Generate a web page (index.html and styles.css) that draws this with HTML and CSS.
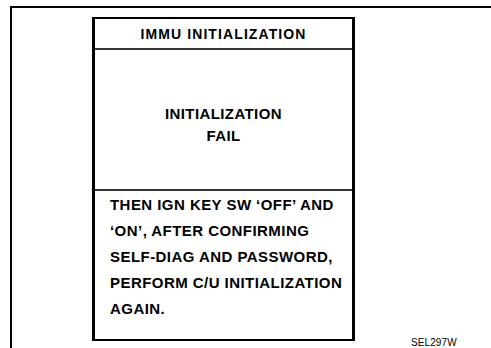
FILE: index.html
```html
<!DOCTYPE html>
<html lang="en">
<head>
    <meta charset="utf-8" />
    <title>IMMU Initialization</title>
    <link rel="stylesheet" href="styles.css">
</head>
<body>
<div class="frame">
    <div class="figure">
        <div class="screen">
            <div class="screen-title">IMMU INITIALIZATION</div>
            <div class="screen-status">
                INITIALIZATION<br>
                FAIL
            </div>
            <div class="screen-note">
                THEN IGN KEY SW ‘OFF’ AND<br>
                ‘ON’, AFTER CONFIRMING<br>
                SELF-DIAG AND PASSWORD,<br>
                PERFORM C/U INITIALIZATION<br>
                AGAIN.
            </div>
        </div>
        <div class="figure-code">SEL297W</div>
    </div>
</div>
</body>
</html>
```

FILE: styles.css
```css
html, body {
    margin: 0;
    background: #fff;
    overflow: hidden;
}
body {
    font-family: "Liberation Sans", Arial, sans-serif;
    color: #000;
}
.frame {
    margin: 6px 0 0 10px;
    height: 342px;
    border-top: 2px solid #000;
    border-left: 2px solid #000;
    box-sizing: border-box;
}
.figure {
    display: flex;
    align-items: flex-end;
    margin: 9px 0 0 80px;
}
.screen {
    width: 263px;
    height: 324px;
    box-sizing: border-box;
    border: 2px solid #000;
    border-left-width: 3px;
    border-right-width: 3px;
    display: flex;
    flex-direction: column;
    font-weight: bold;
    white-space: nowrap;
}
.screen-title {
    height: 28px;
    padding-top: 1px;
    line-height: 28px;
    font-size: 14px;
    letter-spacing: 1.1px;
    text-align: center;
    border-bottom: 2px solid #333;
}
.screen-status {
    height: 141px;
    box-sizing: border-box;
    padding-top: 53px;
    font-size: 15px;
    line-height: 22px;
    letter-spacing: 0.4px;
    text-align: center;
    border-bottom: 2px solid #333;
}
.screen-note {
    flex: 1;
    padding: 1px 0 0 15px;
    font-size: 15px;
    line-height: 26px;
    letter-spacing: 0.45px;
}
.figure-code {
    margin: 0 0 -8px 56px;
    font-size: 10px;
    line-height: 12px;
    letter-spacing: 0.1px;
}
```
